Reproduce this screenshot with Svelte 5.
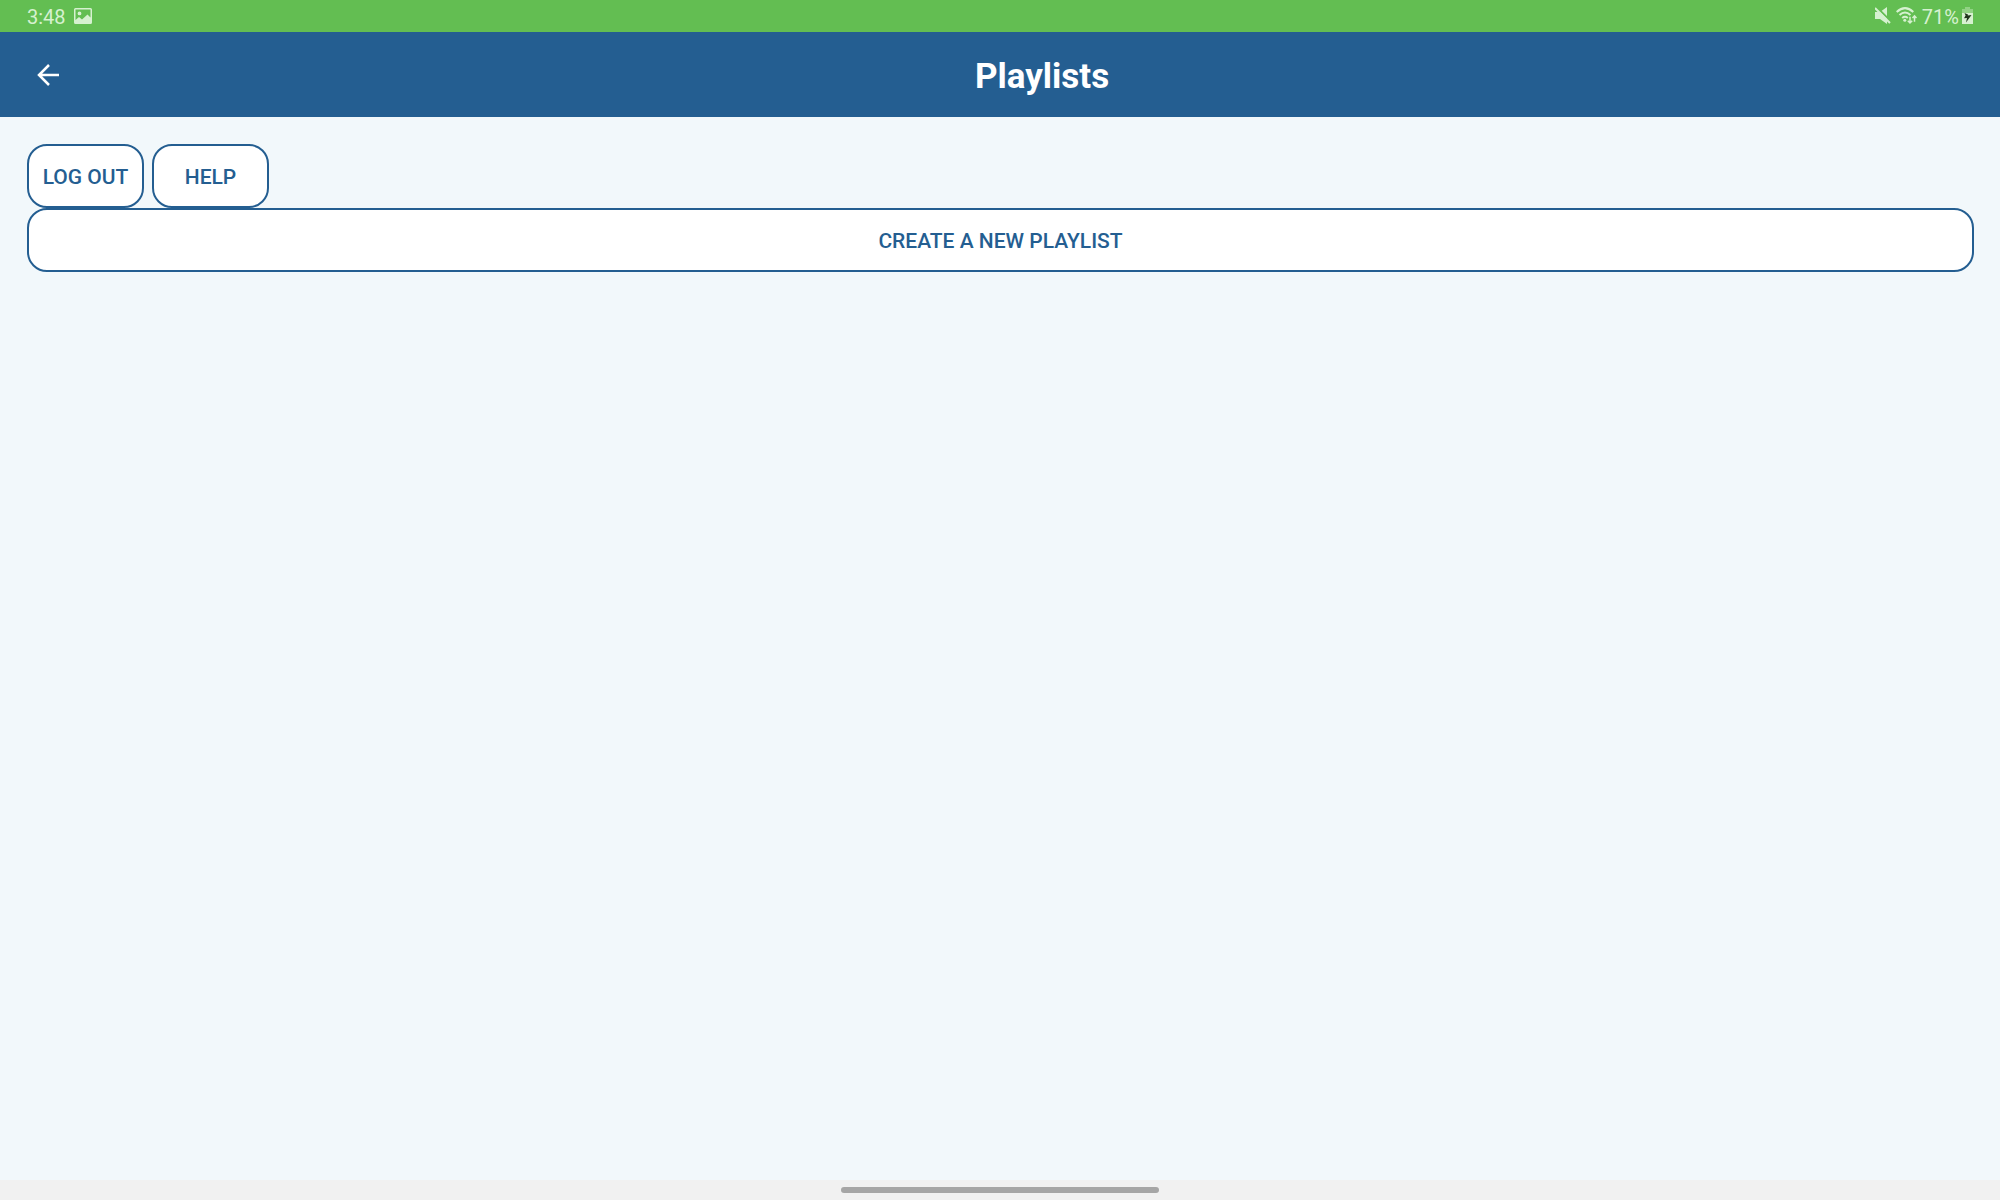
<script>
  let playlists = $state([]);

  function createPlaylist() {
    playlists = [...playlists, `Playlist ${playlists.length + 1}`];
  }
</script>

<div class="screen">
  <div class="status">
    <span>3:48</span>
    <svg class="picture" width="18" height="18" viewBox="0 0 18 18" aria-hidden="true">
      <path fill-rule="evenodd" d="M1.500 0h15a1.500 1.500 0 0 1 1.500 1.500v13a1.500 1.500 0 0 1-1.500 1.500h-15A1.500 1.500 0 0 1 0 14.500v-13A1.500 1.500 0 0 1 1.500 0zM1.500 1.500v10.500l3.500-3 3 2.500 5.500-5 3 3V1.500zM5.500 3.500a1.900 1.900 0 1 1 0 3.800a1.900 1.900 0 0 1 0-3.800z" />
    </svg>
    <div class="system">
      <svg width="16" height="18" viewBox="0 0 16 18" aria-hidden="true">
        <path d="M0 5h5L12 0v17l-7-5H0z" />
        <path class="gap" d="M1 -.5l15 15" />
        <path class="line" d="M0 1l15 15" />
      </svg>
      <svg class="wifi" width="21" height="18" viewBox="0 0 21 18" aria-hidden="true">
        <path class="line" d="M.7 5Q9-2.700 17.300 5M3.500 8q5.500-5 11 0M6.200 11q2.800-2.400 5.600 0" />
        <circle cx="8.800" cy="13.300" r="1.500" />
        <path class="thin" d="M14 9.800v6M11.800 13.800l2.200 2.200 2.200-2.200M18.500 14.800v-6M16.500 11l2-2.200 2 2.200" />
      </svg>
      <span>71%</span>
      <svg class="battery" width="12" height="18" viewBox="0 0 12 18" aria-hidden="true">
        <path class="faded" d="M3 0h5v2h3v4H0V2h3z" />
        <path d="M0 6h11v11H0z" />
        <path class="bolt" d="M2.500 6L6 7.500 5.800 8.500 9.500 8 4 15.500l1-4.500-3 .3 1.600-2.800z" />
      </svg>
    </div>
  </div>

  <header>
    <button class="back" aria-label="Back">
      <svg width="22" height="22" viewBox="0 0 22 22" aria-hidden="true">
        <path d="M22 11H2M12 1L2 11l10 10" />
      </svg>
    </button>
    <h1>Playlists</h1>
  </header>

  <main>
    <div class="actions">
      <button class="action">LOG OUT</button>
      <button class="action">HELP</button>
    </div>
    <button class="action wide" onclick={createPlaylist}>CREATE A NEW PLAYLIST</button>
    {#if playlists.length}
      <ul>
        {#each playlists as name}
          <li>{name}</li>
        {/each}
      </ul>
    {/if}
  </main>

  <footer><div class="handle"></div></footer>
</div>

<style>
  :global(body) {
    margin: 0;
  }

  .screen {
    display: flex;
    flex-direction: column;
    min-height: 100vh;
    background: #f2f8fb;
    font-family: Roboto, sans-serif;
  }

  .status {
    display: flex;
    align-items: center;
    gap: 8px;
    height: 32px;
    padding: 0 26px 0 27px;
    background: #63be52;
    color: #d6f1d0;
    font-size: 20px;
    line-height: 24px;
  }

  .status span {
    padding-top: 2px;
  }

  .status svg {
    display: block;
    fill: #d6f1d0;
  }

  .status .picture {
    margin-top: 2px;
  }

  .system {
    display: flex;
    align-items: center;
    gap: 5px;
    margin-left: auto;
  }

  .status .line,
  .status .thin,
  .status .gap {
    fill: none;
    stroke: #d6f1d0;
    stroke-width: 2;
  }

  .status .thin {
    stroke-width: 1.500;
  }

  .status .gap {
    stroke: #63be52;
  }

  .status .battery {
    margin-left: -2px;
  }

  .faded {
    opacity: 0.4;
  }

  .status .bolt {
    fill: #20351c;
  }

  header {
    display: flex;
    align-items: center;
    height: 85px;
    background: #245e91;
    color: #fff;
  }

  .back {
    display: grid;
    place-items: center;
    width: 84px;
    height: 84px;
    padding: 0 0 0 12px;
    border: 0;
    background: none;
    box-sizing: border-box;
  }

  .back path {
    fill: none;
    stroke: #fff;
    stroke-width: 2.500;
  }

  h1 {
    flex: 1;
    margin: 0;
    padding-top: 4px;
    font-size: 35px;
    line-height: 42px;
    font-weight: 700;
    text-align: center;
  }

  main {
    flex: 1;
    padding: 27px 26px 27px 27px;
  }

  .actions {
    display: flex;
    gap: 8px;
  }

  .action {
    min-width: 117px;
    height: 64px;
    padding: 2px 10px 0;
    border: 2px solid #245e91;
    border-radius: 20px;
    background: #fff;
    color: #245e91;
    font: 500 21px/24px Roboto, sans-serif;
    white-space: nowrap;
  }

  .wide {
    display: block;
    width: 100%;
  }

  ul {
    margin: 20px 0;
    color: #245e91;
    font-size: 21px;
  }

  footer {
    display: flex;
    align-items: center;
    justify-content: center;
    height: 20px;
    background: #f1f1f1;
  }

  .handle {
    width: 318px;
    height: 6px;
    border-radius: 3px;
    background: #a6a6a6;
  }
</style>
